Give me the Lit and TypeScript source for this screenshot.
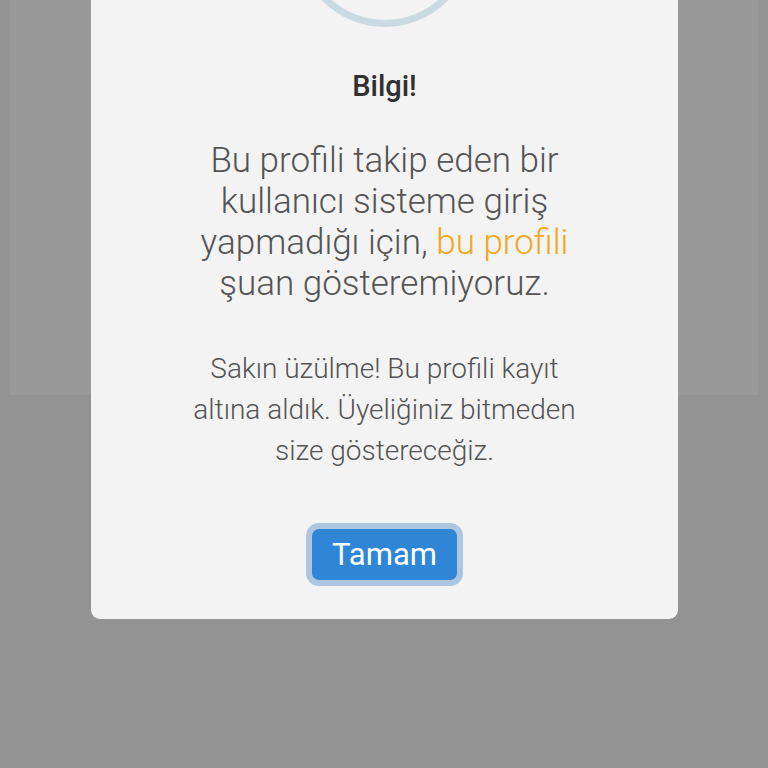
import { LitElement, html, css } from "lit";
import { customElement } from "lit/decorators.js";

@customElement("app-root")
export class AppRoot extends LitElement {
  static styles = css`
    :host {
      display: grid;
      grid-template: 1fr / 1fr;
      min-height: 100vh;
      background: #939393;
      font-family: Roboto, "Liberation Sans", sans-serif;
    }
    .page,
    .overlay {
      grid-area: 1 / 1;
    }
    .page {
      padding: 0 10px;
    }
    .panel {
      height: 395px;
      background: #999999;
    }
    .overlay {
      display: flex;
      align-items: flex-start;
      padding: 0 90px 0 91px;
    }
    .dialog {
      flex: 1;
      display: flex;
      flex-direction: column;
      align-items: center;
      padding-bottom: 39px;
      border-radius: 0 0 9px 9px;
      background: #f3f3f3;
      color: #545454;
      text-align: center;
    }
    .icon {
      display: flex;
      align-items: flex-end;
      height: 27px;
      overflow: hidden;
    }
    .ring {
      flex: none;
      box-sizing: border-box;
      width: 176px;
      height: 176px;
      border: 7px solid #c9dae0;
      border-radius: 50%;
    }
    h2,
    p {
      margin: 0;
      max-width: 400px;
    }
    h2 {
      margin-top: 42px;
      font-size: 29px;
      line-height: 34px;
      font-weight: 500;
      color: #303030;
    }
    .lead {
      margin-top: 37px;
      font-size: 35px;
      line-height: 41px;
      font-weight: 350;
    }
    .accent {
      color: #f0a81c;
    }
    .note {
      margin-top: 44px;
      font-size: 28px;
      line-height: 41px;
      font-weight: 350;
    }
    .confirm {
      margin-top: 58px;
      padding: 0 20px;
      height: 51px;
      border: 0;
      border-radius: 7px;
      outline: 0;
      background: #2f85d6;
      box-shadow: 0 0 0 6px #acc5e0;
      color: #ffffff;
      font: 400 31px/51px Roboto, "Liberation Sans", sans-serif;
    }
  `;

  render() {
    return html`
      <div class="page"><div class="panel"></div></div>
      <div class="overlay">
        <div class="dialog" role="dialog" aria-labelledby="title">
          <div class="icon"><div class="ring"></div></div>
          <h2 id="title">Bilgi!</h2>
          <p class="lead">
            Bu profili takip eden bir kullanıcı sisteme giriş yapmadığı için,
            <span class="accent">bu profili</span> şuan gösteremiyoruz.
          </p>
          <p class="note">
            Sakın üzülme! Bu profili kayıt altına aldık. Üyeliğiniz bitmeden
            size göstereceğiz.
          </p>
          <button class="confirm" type="button">Tamam</button>
        </div>
      </div>
    `;
  }
}
